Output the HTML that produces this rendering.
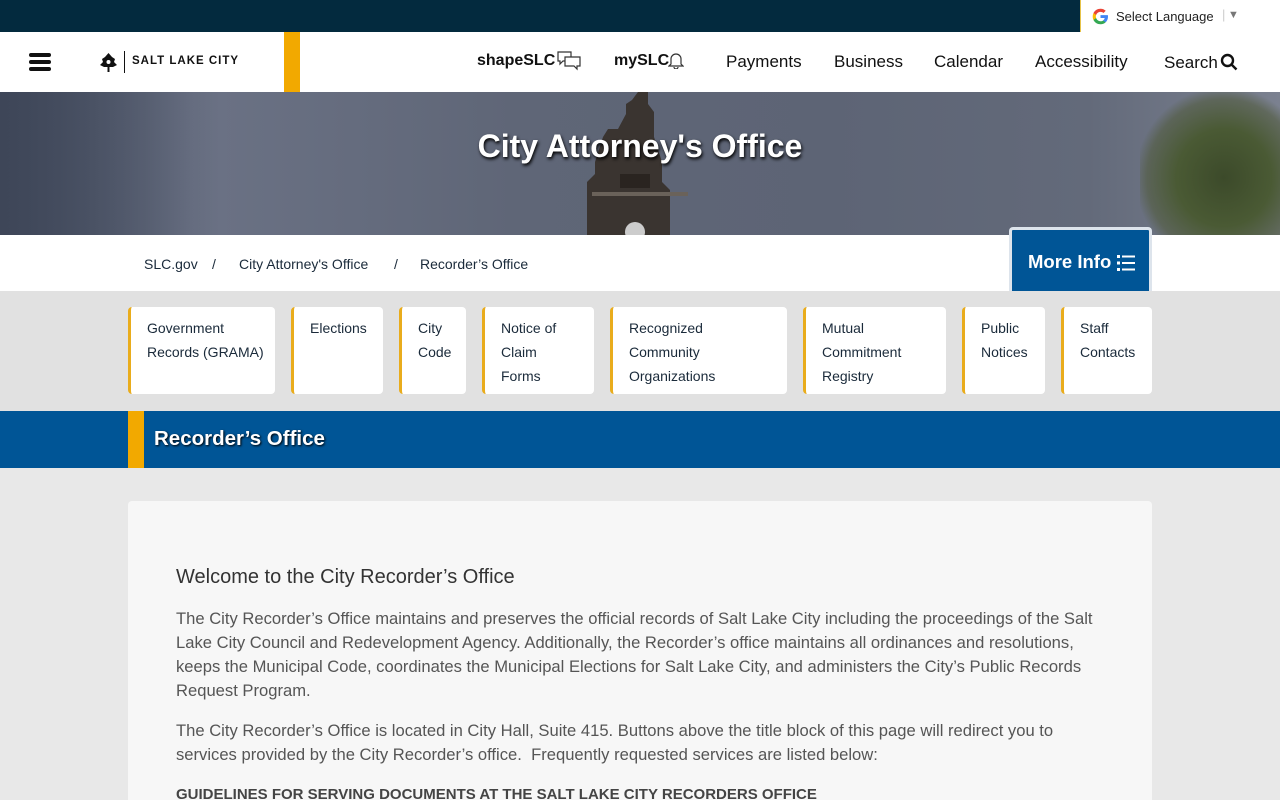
<!DOCTYPE html>
<html><head><meta charset="utf-8">
<style>
*{margin:0;padding:0;box-sizing:border-box}
html,body{width:1280px;height:800px;overflow:hidden}
body{background:#e8e8e8;font-family:"Liberation Sans",sans-serif;position:relative}
.top{position:absolute;left:0;top:0;width:1280px;height:32px;background:#032a3e}
.lang{position:absolute;left:1080px;top:0;width:200px;height:32px;background:#fff;border-left:1px solid #e6c34a;font-size:13px;color:#222}
.hdr{position:absolute;top:32px;left:0;width:1280px;height:60px;background:#fff}
.nav{position:absolute;top:52px;font-size:17px;color:#111;white-space:nowrap}
.hero{position:absolute;top:92px;left:0;width:1280px;height:143px;overflow:hidden;background:linear-gradient(90deg,#4b5466 0%,#6b7285 15%,#5f6677 40%,#5d6475 65%,#636a7a 85%,#7b8190 100%)}
.crumb{position:absolute;top:235px;left:0;width:1280px;height:56px;background:#fff}
.crumb span{position:absolute;top:21px;font-size:14px;color:#1a2a3a}
.cards{position:absolute;top:291px;left:0;width:1280px;height:120px;background:#e1e1e1}
.card{position:absolute;top:16px;height:87px;background:#fff;border-left:3px solid #e9ac1c;border-radius:4px;padding:9px 0 0 16px;font-size:14px;line-height:24px;color:#1a2a3a;white-space:nowrap}
.band{position:absolute;top:411px;left:0;width:1280px;height:57px;background:#005596}
.panel{position:absolute;top:501px;left:128px;width:1024px;height:299px;background:#f7f7f7;border-radius:4px 4px 0 0;overflow:hidden}
p{font-size:16.6px;line-height:24px;color:#555;white-space:nowrap}
</style></head><body>
<div class="top"></div>
<div class="lang">
<svg style="position:absolute;left:11px;top:8px" width="17" height="17" viewBox="0 0 24 24"><path d="M22.6 12.2c0-.8-.1-1.5-.2-2.2H12v4.2h5.9c-.3 1.4-1 2.5-2.2 3.3v2.7h3.6c2.1-1.9 3.3-4.8 3.3-8z" fill="#4285f4"/><path d="M12 23c3 0 5.5-1 7.3-2.7l-3.6-2.7c-1 .7-2.2 1.1-3.7 1.1-2.9 0-5.300-1.9-6.2-4.5H2.1v2.8C3.9 20.6 7.7 23 12 23z" fill="#34a853"/><path d="M5.8 14.2c-.2-.7-.4-1.4-.4-2.2s.1-1.5.4-2.2V7H2.1C1.4 8.5 1 10.2 1 12s.4 3.5 1.1 5l3.7-2.8z" fill="#fbbc05"/><path d="M12 5.4c1.6 0 3.1.6 4.2 1.7l3.2-3.2C17.5 2.1 15 1 12 1 7.7 1 3.9 3.4 2.1 7l3.7 2.8c.9-2.6 3.3-4.4 6.2-4.4z" fill="#ea4335"/></svg>
<span style="position:absolute;left:35px;top:9px">Select Language</span>
<span style="position:absolute;left:141px;top:7px;color:#ccc">|</span>
<span style="position:absolute;left:147px;top:9px;color:#777;font-size:11px">▼</span>
</div>
<div class="hdr">
<div style="position:absolute;left:29px;top:21px;width:22px;height:4px;background:#111;border-radius:2px"></div>
<div style="position:absolute;left:29px;top:28px;width:22px;height:4px;background:#111;border-radius:2px"></div>
<div style="position:absolute;left:29px;top:35px;width:22px;height:4px;background:#111;border-radius:2px"></div>
<svg style="position:absolute;left:100px;top:21px" width="17" height="19" viewBox="0 0 17 19"><path d="M8.5 0L12 4 15 6 14 9 17 12 13 14H9.5V19H7.5V14H4L0 12 3 9 2 6 5 4Z" fill="#111"/><circle cx="8.5" cy="9" r="2" fill="#fff"/></svg>
<div style="position:absolute;left:124px;top:19px;width:1px;height:22px;background:#111"></div>
<div style="position:absolute;left:132px;top:23px;font-size:11.5px;font-weight:bold;letter-spacing:1px;color:#111">SALT LAKE CITY</div>
<div style="position:absolute;left:284px;top:0;width:16px;height:60px;background:#f2a900"></div>
</div>
<div class="nav" style="left:477px;font-weight:bold;font-size:16px">shapeSLC</div>
<svg style="position:absolute;left:557px;top:51px" width="24" height="21" viewBox="0 0 24 21" fill="#fff" stroke="#333" stroke-width="1.2"><path d="M1 1h13v9H6l-3 3v-3H1z"/><path d="M8 6h15v9h-3v3l-3-3H8z"/></svg>
<div class="nav" style="left:614px;font-weight:bold;font-size:16px">mySLC</div>
<svg style="position:absolute;left:668px;top:52px" width="16" height="17" viewBox="0 0 16 17" fill="none" stroke="#333" stroke-width="1.2"><path d="M3 12V7a5 5 0 0 1 10 0v5l2 2H1z"/><path d="M6 15a2 2 0 0 0 4 0"/></svg>
<div class="nav" style="left:726px">Payments</div>
<div class="nav" style="left:834px">Business</div>
<div class="nav" style="left:934px">Calendar</div>
<div class="nav" style="left:1035px">Accessibility</div>
<div class="nav" style="left:1164px;top:53px">Search</div>
<svg style="position:absolute;left:1220px;top:53px" width="18" height="18" viewBox="0 0 18 18" fill="none" stroke="#111" stroke-width="2.4"><circle cx="7.5" cy="7.5" r="5.5"/><path d="M11.5 11.5L16.5 16.5"/></svg>
<div class="hero">
<div style="position:absolute;left:0;top:0;width:220px;height:143px;background:linear-gradient(90deg,#3e4658,rgba(0,0,0,0))"></div>
<svg style="position:absolute;left:580px;top:0" width="120" height="143" viewBox="0 0 120 143"><path d="M58 0h10v12l6 8v25l8 25v20l8 8v53H7V90l8-8V70l8-25 5-8h10l8-15V12l6-4z" fill="#3a3430"/><path d="M12 100h96v4H12z" fill="#6a625a"/><circle cx="55" cy="140" r="10" fill="#ccc"/><rect x="40" y="82" width="30" height="14" fill="#2a2420"/></svg>
<div style="position:absolute;left:1140px;top:0;width:140px;height:143px;background:radial-gradient(ellipse at 60% 60%,#3c4a2a 0%,#4a5a34 40%,rgba(80,90,60,.6) 65%,rgba(0,0,0,0) 75%)"></div>
<div style="position:absolute;left:0;width:1280px;top:36px;text-align:center;color:#fff;font-size:32px;font-weight:bold;text-shadow:1px 2px 3px #000">City Attorney's Office</div>
</div>
<div class="crumb">
<span style="left:144px">SLC.gov</span>
<span style="left:212px">/</span>
<span style="left:239px">City Attorney's Office</span>
<span style="left:394px">/</span>
<span style="left:420px">Recorder’s Office</span>
</div>
<div style="position:absolute;left:1009px;top:227px;width:143px;height:66px;background:#005596;border:3px solid #dde4ec;border-bottom:none;border-radius:4px 4px 0 0;color:#fff;font-size:18.5px;font-weight:bold;padding:21px 0 0 16px">More Info
<svg style="position:absolute;left:105px;top:25px" width="18" height="16" viewBox="0 0 18 16" fill="#fff"><rect x="0" y="0" width="3" height="3"/><rect x="0" y="6.5" width="3" height="3"/><rect x="0" y="13" width="3" height="3"/><rect x="5" y="0.5" width="13" height="2"/><rect x="5" y="7" width="13" height="2"/><rect x="5" y="13.5" width="13" height="2"/></svg></div>
<div class="cards">
<div class="card" style="left:128px;width:147px">Government<br>Records (GRAMA)</div>
<div class="card" style="left:291px;width:92px">Elections</div>
<div class="card" style="left:399px;width:67px">City<br>Code</div>
<div class="card" style="left:482px;width:112px">Notice of<br>Claim<br>Forms</div>
<div class="card" style="left:610px;width:177px">Recognized<br>Community<br>Organizations</div>
<div class="card" style="left:803px;width:143px">Mutual<br>Commitment<br>Registry</div>
<div class="card" style="left:962px;width:83px">Public<br>Notices</div>
<div class="card" style="left:1061px;width:91px">Staff<br>Contacts</div>
</div>
<div class="band"><div style="position:absolute;left:128px;top:0;width:16px;height:57px;background:#f2a900"></div>
<div style="position:absolute;left:154px;top:16px;color:#fff;font-size:20.5px;font-weight:bold;text-shadow:1px 1px 2px #000">Recorder’s Office</div></div>
<div class="panel">
<div style="position:absolute;left:48px;top:65px;font-size:20px;color:#333">Welcome to the City Recorder’s Office</div>
<p style="position:absolute;left:48px;top:106px">The City Recorder’s Office maintains and preserves the official records of Salt Lake City including the proceedings of the Salt<br>Lake City Council and Redevelopment Agency. Additionally, the Recorder’s office maintains all ordinances and resolutions,<br>keeps the Municipal Code, coordinates the Municipal Elections for Salt Lake City, and administers the City’s Public Records<br>Request Program.</p>
<p style="position:absolute;left:48px;top:218px">The City Recorder’s Office is located in City Hall, Suite 415. Buttons above the title block of this page will redirect you to<br>services provided by the City Recorder’s office.&nbsp; Frequently requested services are listed below:</p>
<p style="position:absolute;left:48px;top:282px;font-weight:bold;color:#444;font-size:15px">GUIDELINES FOR SERVING DOCUMENTS AT THE SALT LAKE CITY RECORDERS OFFICE</p>
</div>
</body></html>
